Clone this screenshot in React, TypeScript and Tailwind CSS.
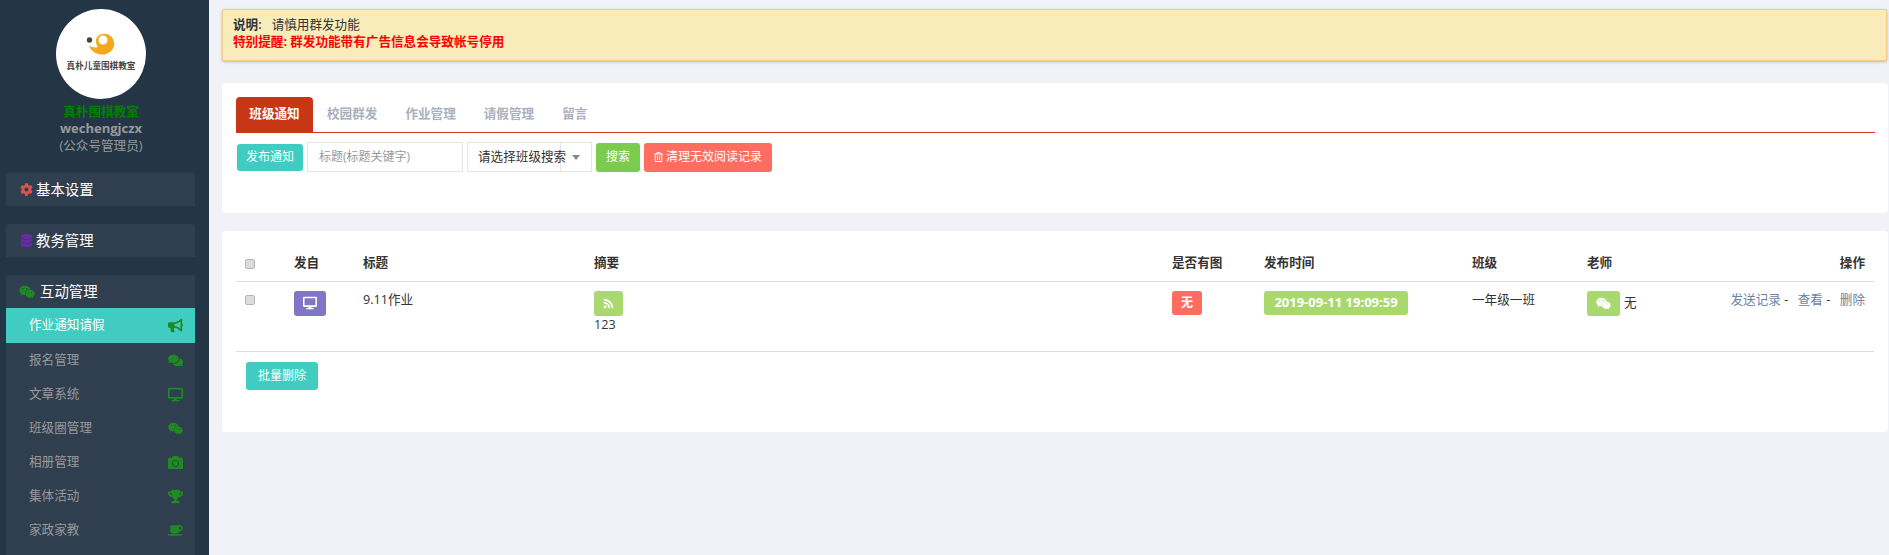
import {
  FaBullhorn,
  FaCamera,
  FaCoffee,
  FaCog,
  FaComments,
  FaDatabase,
  FaDesktop,
  FaRegTrashAlt,
  FaRss,
  FaTrophy,
  FaWeixin,
} from "react-icons/fa";

const subMenu = [
  { label: "作业通知请假", icon: FaBullhorn, active: true },
  { label: "报名管理", icon: FaComments },
  { label: "文章系统", icon: FaDesktop },
  { label: "班级圈管理", icon: FaWeixin },
  { label: "相册管理", icon: FaCamera },
  { label: "集体活动", icon: FaTrophy },
  { label: "家政家教", icon: FaCoffee },
];

const tabs = ["校园群发", "作业管理", "请假管理", "留言"];

function Logo() {
  return (
    <div className="mx-auto flex h-[90px] w-[90px] flex-col items-center rounded-full bg-white pt-[22px]">
      <svg viewBox="30 22 30 26" className="h-[26px] w-[30px]">
        <circle cx="33.5" cy="31" r="2.7" fill="#444" />
        <path
          d="M33 37C36 44 44 47 50 45C56 43 59 38 58 33C57 28 53 24 47 25C43 25 40 28 40 32C40 35 41 37 42 38C39 39 36 38 33 37Z"
          fill="#f6a81c"
        />
        <circle cx="47" cy="31" r="4.5" fill="#fff" />
      </svg>
      <div className="mt-[4px] text-[8.6px] font-bold leading-[10px] whitespace-nowrap text-[#444]">真朴儿童围棋教室</div>
    </div>
  );
}

function Sidebar() {
  return (
    <aside className="h-[555px] w-[209px] shrink-0 overflow-hidden bg-[#243645] px-[6px] pt-[9px]">
      <div className="pr-[7px]">
        <Logo />
        <div className="mt-[4px] text-center text-[12.6px] leading-[17px] text-[#008000] font-bold">真朴围棋教室</div>
        <div className="text-center text-[13px] font-bold leading-[17px] text-[#999]">wechengjczx</div>
        <div className="text-center text-[12.6px] leading-[17px] text-[#999]">(公众号管理员)</div>
      </div>
      <div className="mt-[19px] flex h-[33px] w-[189px] items-center rounded-t-[3px] bg-[#2f3f50] pl-[14px] text-[14.4px] text-white">
        <FaCog className="mr-[3px] h-[13px] w-[13px] text-[#d9534f]" />
        基本设置
      </div>
      <div className="mt-[18px] flex h-[33px] w-[189px] items-center rounded-t-[3px] bg-[#2f3f50] pl-[14px] text-[14.4px] text-white">
        <FaDatabase className="mr-[3px] h-[13px] w-[13px] text-[#6a2aa8]" />
        教务管理
      </div>
      <div className="mt-[18px] h-[300px] w-[189px] rounded-t-[3px] bg-[#2f3f50]">
        <div className="flex h-[33px] items-center pl-[13px] text-[14.4px] text-white">
          <FaWeixin className="mr-[5px] h-[16px] w-[16px] text-[#1f8a22]" />
          互动管理
        </div>
        {subMenu.map((item) => {
          const Icon = item.icon;
          return (
            <div
              key={item.label}
              className={`flex items-center justify-between pl-[23px] pr-[12px] text-[12.6px] ${
                item.active ? "h-[35px] bg-[#40ccc0] text-white" : "h-[34px] text-[#999]"
              }`}
            >
              <span>{item.label}</span>
              <Icon className="h-[15px] w-[15px] text-[#1f8a22]" />
            </div>
          );
        })}
      </div>
    </aside>
  );
}

function Toolbar() {
  return (
    <div className="mt-[9px] flex items-center pl-[1px] text-[12px]">
      <div className="flex h-[27px] w-[66px] items-center justify-center rounded-[3px] bg-[#40ccc0] text-white">发布通知</div>
      <div className="ml-[4px] flex h-[30px] w-[156px] items-center border border-[#e5e6e7] pl-[11px] text-[#999]">标题(标题关键字)</div>
      <div className="ml-[4px] flex h-[30px] w-[125px] items-center border border-[#e5e6e7] pl-[10px] text-[12.6px] text-[#333]">
        <span className="relative z-10 w-[82px] whitespace-nowrap">请选择班级搜索</span>
        <span className="h-[28px] w-px bg-[#e5e6e7]" />
        <span className="ml-[11px] h-0 w-0 border-x-[4px] border-t-[5px] border-x-transparent border-t-[#888]" />
      </div>
      <div className="ml-[4px] flex h-[29px] w-[44px] items-center justify-center rounded-[3px] bg-[#7acb4e] text-white">搜索</div>
      <div className="ml-[4px] flex h-[29px] w-[128px] items-center justify-center rounded-[3px] bg-[#ff6c60] text-white">
        <FaRegTrashAlt className="mr-[3px] h-[10px] w-[9px]" />
        清理无效阅读记录
      </div>
    </div>
  );
}

function IconBadge({ children, className }: { children: React.ReactNode; className: string }) {
  return <span className={`flex items-center justify-center rounded-[3px] text-white ${className}`}>{children}</span>;
}

function Checkbox({ className }: { className: string }) {
  return <span className={`block h-[10px] w-[10px] rounded-[2px] border border-[#b5b5b5] bg-[#dcdcdc] ${className}`} />;
}

function NoticeTable() {
  const th = "h-[50px] pl-[8px] pt-[16px] text-left align-middle text-[12.6px] font-semibold text-[#333]";
  const td = "h-[70px] pl-[8px] pt-[9px] align-top text-[12.6px] text-[#333]";
  return (
    <table className="w-[1638px] table-fixed border-collapse">
      <colgroup>
        <col className="w-[50px]" />
        <col className="w-[69px]" />
        <col className="w-[231px]" />
        <col className="w-[578px]" />
        <col className="w-[92px]" />
        <col className="w-[208px]" />
        <col className="w-[115px]" />
        <col className="w-[120px]" />
        <col className="w-[175px]" />
      </colgroup>
      <thead>
        <tr className="border-b border-[#ddd]">
          <th className={th}>
            <Checkbox className="ml-px" />
          </th>
          <th className={th}>发自</th>
          <th className={th}>标题</th>
          <th className={th}>摘要</th>
          <th className={th}>是否有图</th>
          <th className={th}>发布时间</th>
          <th className={th}>班级</th>
          <th className={th}>老师</th>
          <th className={`${th} pr-[9px] !text-right`}>操作</th>
        </tr>
      </thead>
      <tbody>
        <tr className="border-b border-[#ddd]">
          <td className={td}>
            <Checkbox className="ml-px mt-[4px]" />
          </td>
          <td className={td}>
            <IconBadge className="h-[25px] w-[32px] bg-[#8175c7]">
              <FaDesktop className="h-[14px] w-[14px]" />
            </IconBadge>
          </td>
          <td className={td}>9.11作业</td>
          <td className={td}>
            <IconBadge className="h-[25px] w-[29px] bg-[#a9d86e]">
              <FaRss className="h-[11px] w-[11px]" />
            </IconBadge>
            <div className="leading-[18px]">123</div>
          </td>
          <td className={td}>
            <IconBadge className="h-[24px] w-[30px] bg-[#ff6c60] text-[12px] font-bold">无</IconBadge>
          </td>
          <td className={td}>
            <IconBadge className="h-[24px] w-[144px] bg-[#a9d86e] text-[13px] font-bold">2019-09-11 19:09:59</IconBadge>
          </td>
          <td className={td}>一年级一班</td>
          <td className={td}>
            <div className="flex items-center">
              <IconBadge className="h-[25px] w-[33px] bg-[#a9d86e]">
                <FaWeixin className="h-[15px] w-[15px]" />
              </IconBadge>
              <span className="ml-[4px]">无</span>
            </div>
          </td>
          <td className={`${td} pr-[9px] text-right whitespace-nowrap`}>
            <span className="text-[#6d83a3]">发送记录</span> -<span className="inline-block w-[3px]" />
            &nbsp; <span className="text-[#6d83a3]">查看</span> -<span className="inline-block w-[3px]" />
            &nbsp; <span className="text-[#6d83a3]">删除</span>
          </td>
        </tr>
      </tbody>
    </table>
  );
}

export default function App() {
  return (
    <div className="flex h-[555px] w-[1889px] overflow-hidden bg-[#f1f2f7] font-['Open_Sans','Noto_Sans_CJK_SC',sans-serif]">
      <Sidebar />
      <main className="ml-[13px] min-w-0 flex-1 pt-[9px]">
        <div className="mr-[2px] h-[52px] rounded-[2px] border border-[#f3cd85] bg-[#f9ecbb] pl-[10px] pt-[6px] text-[12.6px] leading-[17px] text-[#333] shadow-[0_1px_3px_rgba(0,0,0,0.25)]">
          <div>
            <span className="font-semibold">说明:</span>
            <span className="ml-[10px]">请慎用群发功能</span>
          </div>
          <div className="font-bold text-[#ff0000]">特别提醒: 群发功能带有广告信息会导致帐号停用</div>
        </div>

        <section className="mr-px mt-[22px] h-[130px] rounded-[4px] bg-white pl-[14px] pr-[13px] pt-[14px]">
          <div className="flex h-[36px] items-stretch border-b border-[#d0391b] text-[12.6px] font-bold">
            <div className="flex w-[77px] items-center justify-center rounded-t-[4px] bg-[#c93616] text-white">班级通知</div>
            {tabs.map((t) => (
              <div key={t} className="flex items-center px-[14px] text-[#a9b0bf]">
                {t}
              </div>
            ))}
          </div>
          <Toolbar />
        </section>

        <section className="mr-px mt-[18px] h-[201px] rounded-[4px] bg-white pl-[14px]">
          <NoticeTable />
          <div className="ml-[10px] mt-[10px] flex h-[28px] w-[72px] items-center justify-center rounded-[3px] bg-[#40ccc0] text-[12px] text-white">批量删除</div>
        </section>
      </main>
    </div>
  );
}
